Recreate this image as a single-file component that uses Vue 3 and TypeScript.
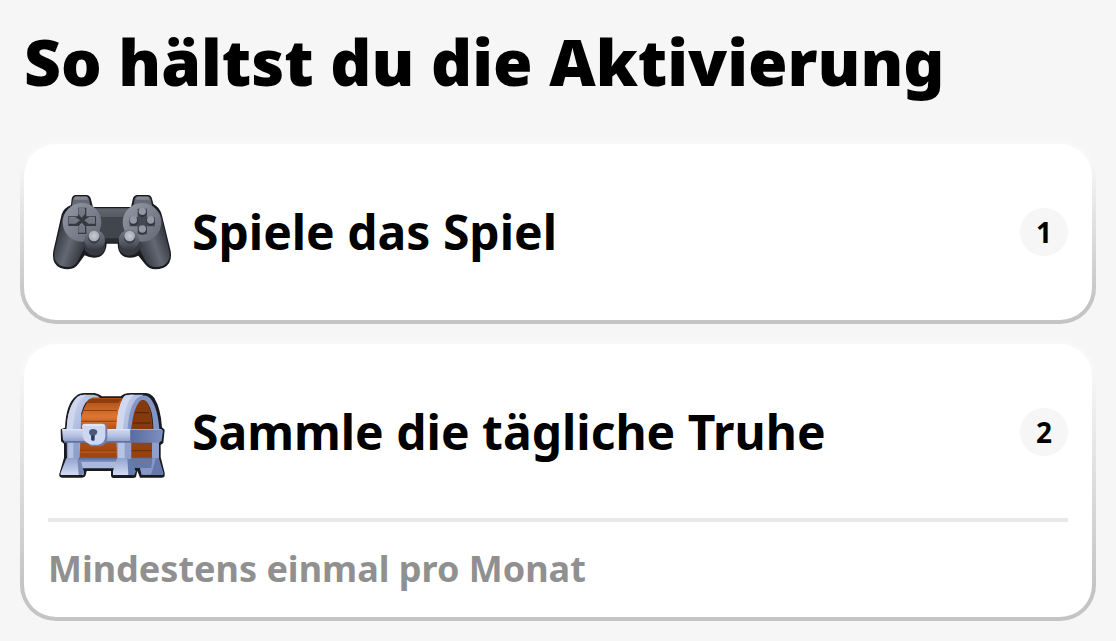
<script setup lang="ts">
interface Step {
  icon: 'gamepad' | 'chest'
  title: string
  note?: string
}

const steps: Step[] = [
  { icon: 'gamepad', title: 'Spiele das Spiel' },
  { icon: 'chest', title: 'Sammle die tägliche Truhe', note: 'Mindestens einmal pro Monat' },
]
</script>

<template>
  <main class="page">
    <h1 class="heading">So hältst du die Aktivierung</h1>
    <ol class="steps">
      <li v-for="(step, index) in steps" :key="step.icon" class="card">
        <div class="row">
          <svg v-if="step.icon === 'gamepad'" class="icon" viewBox="9 -51 384 384" aria-hidden="true">
            <defs>
              <linearGradient id="padBody" x1="0" y1="0" x2="0" y2="1">
                <stop offset="0" stop-color="#62666f" />
                <stop offset=".6" stop-color="#454952" />
                <stop offset="1" stop-color="#3c4049" />
              </linearGradient>
              <linearGradient id="padGripL" gradientUnits="userSpaceOnUse" x1="32" y1="165" x2="112" y2="194">
                <stop offset="0" stop-color="#383c45" />
                <stop offset=".5" stop-color="#646872" />
                <stop offset="1" stop-color="#383b44" />
              </linearGradient>
              <linearGradient id="padGripR" gradientUnits="userSpaceOnUse" x1="290" y1="194" x2="370" y2="165">
                <stop offset="0" stop-color="#3b3f48" />
                <stop offset=".5" stop-color="#646872" />
                <stop offset="1" stop-color="#343841" />
              </linearGradient>
              <linearGradient id="padDisc" x1="0" y1="0" x2="1" y2="1">
                <stop offset="0" stop-color="#9598a5" />
                <stop offset="1" stop-color="#646874" />
              </linearGradient>
              <linearGradient id="padStick" x1="0" y1="0" x2="0" y2="1">
                <stop offset="0" stop-color="#747885" />
                <stop offset=".65" stop-color="#555964" />
                <stop offset="1" stop-color="#353841" />
              </linearGradient>
              <radialGradient id="padKnob">
                <stop offset="0" stop-color="#cacbd2" />
                <stop offset="1" stop-color="#a8aab5" />
              </radialGradient>
            </defs>
            <path d="M78 60 80 41Q82 31 93 30H124Q134 31 137 40L144 66H258L264 40Q267 31 277 30H308Q319 31 321 41L325 57Q344 67 350 88L377 198Q383 236 356 248Q318 262 300 237L280 212Q262 222 240 216Q218 207 218 176H185Q183 207 162 216Q140 222 119 211L100 237Q83 261 45 248Q19 236 25 198L50 88Q56 69 78 60Z" fill="#191b1f" />
            <path d="M80 65 84 42Q86 35 94 34H123Q130 35 132 42L137 66ZM264 66 269 42Q271 35 279 34H307Q315 35 317 42L322 66Z" fill="#656973" />
            <path d="M90 35H126L129 44H87ZM275 35H309L313 44H273Z" fill="#858995" />
            <path d="M143 70H258V165H143Z" fill="url(#padBody)" />
            <path d="M160 96H240V165H160Z" fill="#41454e" />
            <path d="M166 160H235V173H166Z" fill="#292b31" />
            <path d="M54 91 Q76 56 110 76L130 165 97 231Q82 254 47 242Q23 230 29 199Z" fill="url(#padGripL)" />
            <path d="M348 91Q324 57 292 76L270 165 303 231Q319 254 354 242Q379 230 373 199Z" fill="url(#padGripR)" />
            <path d="M119 165H180V190Q174 211 152 212Q130 212 119 195Z" fill="#373a43" />
            <path d="M222 165H283V195Q271 212 250 212Q228 210 222 190Z" fill="#373a43" />
            <circle cx="111" cy="112" r="58" fill="url(#padDisc)" />
            <circle cx="291" cy="112" r="58" fill="url(#padDisc)" />
            <circle cx="149" cy="165" r="31" fill="url(#padStick)" />
            <circle cx="252" cy="165" r="31" fill="url(#padStick)" />
            <circle cx="147" cy="159" r="17" fill="#3b3f48" />
            <circle cx="254" cy="159" r="17" fill="#3b3f48" />
            <circle cx="147" cy="153" r="16" fill="url(#padKnob)" />
            <circle cx="254" cy="153" r="16" fill="url(#padKnob)" />
            <path d="M99 68H124V94H153V123H124V147H99V123H70V94H99Z" fill="#353942" />
            <path d="M100 70H120V87L110 98 100 87ZM72 97H92L105 106 92 116H72ZM150 97H130L118 106 130 116H150ZM100 143V125L110 113 120 125V143Z" fill="#737783" />
            <path d="M102 72H118M74 98H90M132 98H148M101 125 110 115 119 125" fill="none" stroke="#9194a0" stroke-width="2" />
            <path d="M278 71H306V97H330V124H306V148H278V124H254V97H278Z" fill="#444852" />
            <g fill="#30343c">
              <circle cx="292" cy="83" r="13" /><circle cx="266" cy="109" r="13" />
              <circle cx="317" cy="109" r="13" /><circle cx="292" cy="136" r="13" />
            </g>
            <g fill="#9497a3">
              <circle cx="292" cy="79" r="11" /><circle cx="265" cy="105" r="11" />
              <circle cx="317" cy="105" r="11" /><circle cx="292" cy="132" r="11" />
            </g>
          </svg>

          <svg v-else class="icon" viewBox="9 -51 384 384" aria-hidden="true">
            <defs>
              <linearGradient id="chestWood" x1="0" y1="0" x2="0" y2="1">
                <stop offset="0" stop-color="#a84c16" />
                <stop offset=".3" stop-color="#dc7632" />
                <stop offset=".5" stop-color="#b65218" />
                <stop offset="1" stop-color="#9c4310" />
              </linearGradient>
              <linearGradient id="chestArch" x1="0" y1="0" x2="1" y2="1">
                <stop offset="0" stop-color="#d5dcf3" />
                <stop offset=".5" stop-color="#aab7dc" />
                <stop offset="1" stop-color="#7184b7" />
              </linearGradient>
              <linearGradient id="chestBand" x1="0" y1="0" x2="0" y2="1">
                <stop offset="0" stop-color="#d1d9f0" />
                <stop offset=".5" stop-color="#b7c3e4" />
                <stop offset="1" stop-color="#8999c7" />
              </linearGradient>
              <linearGradient id="chestFoot" x1="0" y1="0" x2="0" y2="1">
                <stop offset="0" stop-color="#93a4ce" />
                <stop offset="1" stop-color="#d2dbf5" />
              </linearGradient>
              <linearGradient id="chestSide" x1="0" y1="0" x2="1" y2="0">
                <stop offset="0" stop-color="#596c9f" />
                <stop offset="1" stop-color="#7c8fc0" />
              </linearGradient>
            </defs>
            <path d="M60 128Q63 55 94 32Q104 23 122 24H149Q161 26 171 34H227Q239 24 256 24H303Q318 25 328 39Q347 69 351 127L359 134 355 174 347 180V216L359 264V273Q358 278 350 278H285L277 257 273 276Q271 279 262 279H204Q197 277 198 266V258H125L122 271Q120 278 111 278H51Q41 277 43 267L57 218V176L48 169 47 133Z" fill="#191b22" />
            <path d="M105 130Q108 65 139 39H238L242 132V223H105Z" fill="url(#chestWood)" />
            <path d="M113 77H216M108 109H214M107 198H215" fill="none" stroke="#853a0b" stroke-width="3" />
            <path d="M133 42H231L219 54H123Z" fill="#8f3c0e" />
            <path d="M113 80H215M108 112H213M107 201H215" fill="none" stroke="#d87434" stroke-width="2" />
            <path d="M259 223V133Q263 64 285 46H303Q320 69 323 126V223Z" fill="#85390d" />
            <path d="M270 83H311M265 114H316M258 197H323" stroke="#4f2009" stroke-width="3" />
            <path d="M258 170H323V220H258Z" fill="#94420f" />
            <path d="M258 197H323" stroke="#672c0a" stroke-width="3" />
            <path d="M65 132Q68 62 98 35Q107 28 123 29H146Q159 31 165 38H142Q119 45 109 84L104 220H66Z" fill="url(#chestArch)" />
            <path d="M65 132Q68 62 98 35Q107 28 123 29L107 44Q87 69 83 132Z" fill="#cfd7ef" />
            <path d="M214 132Q216 70 236 36Q241 29 256 29H296L279 45Q261 68 255 132V221H216Z" fill="url(#chestArch)" />
            <path d="M248 132Q252 67 274 42Q288 30 303 32Q318 35 329 63Q340 90 343 132H325Q324 70 303 48Q294 42 285 48Q265 69 259 132V222H242Z" fill="#8395c4" />
            <path d="M214 132Q216 70 236 36Q241 29 256 29H267L253 45Q237 73 234 132Z" fill="#d0d8f0" />
            <path d="M66 171H103V222H66ZM216 171H258V222H216ZM321 171H342V222H321Z" fill="#8fa0cd" />
            <path d="M70 171H85V219H70ZM219 171H239V219H219Z" fill="#b7c3e2" />
            <path d="M51 132H256V171H59L54 164Z" fill="url(#chestBand)" />
            <path d="M256 132H349L354 137 350 166 343 173H256Z" fill="url(#chestSide)" />
            <path d="M51 132H256V136H52Z" fill="#dce3f6" />
            <path d="M256 132H349V135H256Z" fill="#9aa9d2" />
            <path d="M57 168H256V173H58ZM105 218H216V224H105ZM258 218H323V223H258Z" fill="#60739f" />
            <path d="M106 224H215V250H106Z" fill="#a9b8df" />
            <path d="M106 224H215V230H106Z" fill="#7386b2" />
            <path d="M257 222H326V249H268Z" fill="#6578aa" />
            <path d="M64 220H98L107 226 116 260V269Q107 271 47 270V263Z" fill="url(#chestFoot)" />
            <path d="M97 220 107 225 117 263 111 270H101Z" fill="#7789b5" />
            <path d="M216 220H249L259 225 271 259 267 270H204V258Z" fill="url(#chestFoot)" />
            <path d="M247 220 259 225 272 261 266 270H250Z" fill="#647bad" />
            <path d="M322 220H342L355 263V270H290L285 248H325Z" fill="#6478aa" />
            <path d="M322 220H332L325 248 318 269H290L285 249H319Z" fill="#8798c6" />
            <path d="M115 120 180 116 187 123V160Q185 181 163 184H135Z" fill="#6e80ac" />
            <path d="M118 116H172Q180 116 181 123V154Q180 174 160 179H139Q119 175 114 157L111 122Q111 117 118 116Z" fill="#ced7f2" />
            <path d="M119 118H171Q176 118 178 123H114Q114 119 119 118Z" fill="#e2e8f9" />
            <path d="M138 164Q144 171 149 166L150 151Q157 148 157 140Q155 132 144 132Q133 132 132 142Q133 149 138 152Z" fill="#4a587b" />
            <path d="M140 151V163Q144 167 146 164V152Z" fill="#293247" />
          </svg>

          <h2 class="title">{{ step.title }}</h2>
          <span class="badge">{{ index + 1 }}</span>
        </div>
        <p v-if="step.note" class="note">{{ step.note }}</p>
      </li>
    </ol>
  </main>
</template>

<style>
body {
  margin: 0;
  background: #f6f6f6;
}
</style>

<style scoped>
.page {
  box-sizing: border-box;
  padding: 20px;
  color: #000;
  font-family: "Noto Sans", sans-serif;
}

.heading {
  margin: 0 4px 36px;
  font-size: 64px;
  line-height: 84px;
  font-weight: 900;
}

.steps {
  display: flex;
  flex-direction: column;
  gap: 16px;
  margin: 0;
  padding: 0;
  list-style: none;
}

.card {
  padding: 24px;
  border: 4px solid transparent;
  border-radius: 36px;
  background:
    linear-gradient(#fff, #fff) padding-box,
    linear-gradient(#f8f8f8, #f8f8f8 10%, #c4c4c4 88%) border-box;
}

.row {
  display: flex;
  align-items: center;
  gap: 16px;
}

.icon {
  flex: none;
  width: 128px;
  height: 128px;
}

.title {
  flex: 1;
  margin: 0;
  font-size: 48px;
  line-height: 66px;
  font-weight: 700;
}

.badge {
  display: grid;
  place-items: center;
  flex: none;
  width: 48px;
  height: 48px;
  border-radius: 50%;
  background: #f6f6f6;
  font-size: 28px;
  line-height: 40px;
  font-weight: 700;
}

.note {
  margin: 22px 0 0;
  padding-top: 23px;
  border-top: 4px solid #e8e8e8;
  color: #909090;
  font-size: 36px;
  line-height: 48px;
  font-weight: 700;
}
</style>
